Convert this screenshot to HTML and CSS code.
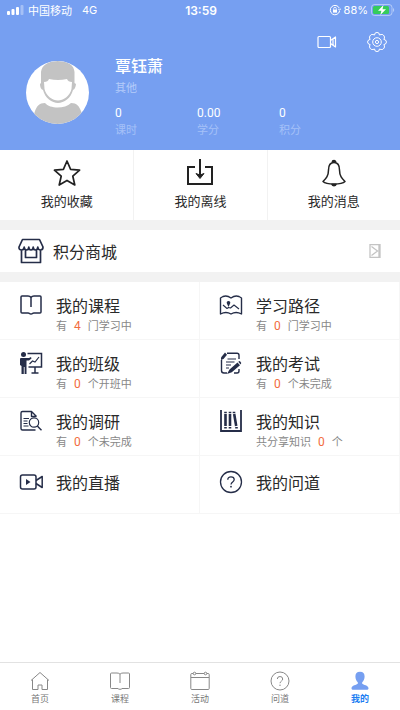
FILE: index.html
```html
<!DOCTYPE html>
<html lang="zh-CN">
<head>
<meta charset="utf-8">
<meta name="viewport" content="width=device-width, initial-scale=1">
<title>我的</title>
<link rel="stylesheet" href="styles.css">
</head>
<body>
<header class="profile">
  <div class="status">
    <div class="status-side">
      <svg class="signal" viewBox="0 0 17 10" fill="#fff"><rect x="0" y="6" width="3" height="4" rx="1"/><rect x="4.5" y="4" width="3" height="6" rx="1"/><rect x="9" y="2" width="3" height="8" rx="1"/><rect x="13.5" y="0" width="3" height="10" rx="1" opacity=".35"/></svg>
      <span>中国移动</span><span class="network">4G</span>
    </div>
    <time class="clock">13:59</time>
    <div class="status-side status-end">
      <svg class="lock" viewBox="0 0 12 12" fill="none" stroke="#fff"><path d="M10.3 4.2A4.7 4.7 0 1 0 10.6 7M9.2 5l1.5 1.2L11.7 4.6"/><path d="M4.7 5.8V4.6a1.3 1.3 0 0 1 2.6 0v1.2" stroke-width=".8"/><rect x="4" y="5.6" width="4" height="3" fill="#fff" stroke="none"/></svg>
      <span>88%</span>
      <svg class="battery" viewBox="0 0 24 12"><rect x=".5" y=".5" width="20.5" height="11" rx="3" fill="none" stroke="#fff" opacity=".45"/><path d="M22 4c1.6.5 1.6 3.5 0 4z" fill="#fff" opacity=".45"/><rect x="2" y="2" width="16" height="8" rx="1.5" fill="#35cc5b"/><path d="M12.5 1 7 6.7h3.4L9.3 11 15 5.2h-3.5z" fill="#fff"/></svg>
    </div>
  </div>
  <div class="tools">
    <button type="button" class="tool" aria-label="视频"><svg viewBox="0 0 22 22" fill="none" stroke="#fff" stroke-width="1.2" stroke-linejoin="round"><rect x="2" y="5.5" width="12.5" height="11" rx="1"/><path d="M14.5 9.500 19.500 6v10l-5-3.500M17 8v6"/></svg></button>
    <button type="button" class="tool" aria-label="设置"><svg viewBox="0 0 22 22" fill="none" stroke="#fff"><path d="M9 2.200Q11 .6 13 2.200L13.400 4Q15 3.200 16.800 3.600Q18.700 4.700 18.500 7L17.800 8.400L19.500 9Q21.500 11 19.500 13L17.800 13.600L18.500 15Q18.700 17.300 16.800 18.400Q15 18.800 13.400 18L13 19.800Q11 21.400 9 19.800L8.600 18Q7 18.800 5.200 18.400Q3.300 17.300 3.500 15L4.200 13.600L2.500 13Q.5 11 2.500 9L4.200 8.400L3.500 7Q3.300 4.700 5.200 3.600Q7 3.200 8.600 4Z" stroke-linejoin="round"/><circle cx="11" cy="11" r="4.300"/><circle cx="11" cy="11" r="1.600"/></svg></button>
  </div>
  <div class="user">
    <svg class="avatar" viewBox="0 0 63 63"><defs><clipPath id="face"><circle cx="31.500" cy="31.500" r="31.500"/></clipPath></defs><g clip-path="url(#face)"><path fill="#fff" d="M0 0h63v63H0z"/><path fill="#c3c3c3" d="M15 22V11C16 4 22 0 32 0s16 4 16.500 11v11l1.500 1q-.5 5-3 6C45 37 38 42 32 42S19 37 17 29q-3-1-3-6z"/><path fill="#fff" d="M18 21q4 0 5-3 9 2 18 0 1 3 5 3l-.5 7C44 35 37 39.500 32 39.500S20 35 18.500 28z"/><path fill="#c3c3c3" d="M5 63l4-13c2-5 4-8 10-8 5 6 20 6 26 0 6 0 8 3 10 8l4 13z"/></g></svg>
    <div class="details">
      <h1 class="name">覃钰萧</h1>
      <p class="role">其他</p>
      <dl class="stats">
        <div><dd>0</dd><dt>课时</dt></div>
        <div><dd>0.00</dd><dt>学分</dt></div>
        <div><dd>0</dd><dt>积分</dt></div>
      </dl>
    </div>
  </div>
</header>
<main>
  <nav class="quick" aria-label="快捷入口">
    <a href="#favorites"><svg viewBox="0 0 28 28" fill="none" stroke="#222" stroke-width="1.700" stroke-linejoin="round"><path d="m14 2 3.600 8.300 9 .9-6.800 6 2 8.800-7.800-4.600L6.200 26l2-8.800-6.800-6 9-.9z"/></svg>我的收藏</a>
    <a href="#offline"><svg viewBox="0 0 28 28" fill="none" stroke="#222" stroke-width="2"><path d="M9 8H2v17h24V8h-7M14 0v18"/><path d="m10 14.500 4 5 4-5-4 1.500z" fill="#222" stroke-width="1"/></svg>我的离线</a>
    <a href="#messages"><svg viewBox="0 0 28 28" fill="none" stroke="#222" stroke-width="1.500" stroke-linejoin="round"><path d="M14 3.500c-4.500 0-5.500 3.500-5.500 7.500 0 6-2.500 8.500-5.500 11.500 2 2 6 2.500 11 2.500s9-.5 11-2.500c-3-3-5.500-5.500-5.500-11.500 0-4-1-7.500-5.500-7.500z"/><path d="M12.300 3a1.700 1.500 0 0 1 3.400 0M12 25.500c.7 1.800 3.300 1.800 4 0z" fill="#222"/></svg>我的消息</a>
  </nav>
  <a class="store" href="#store">
    <svg class="store-icon" viewBox="0 0 26 26" fill="none" stroke="#252d48" stroke-width="1.700" stroke-linejoin="round"><path d="M4.500 1.500h17L25 9q0 3-2.500 3T19.800 9q0 3-2.300 3t-2.300-3q0 3-2.200 3t-2.200-3q0 3-2.300 3T6.200 9q0 3-2.700 3T1 9zM3.500 12v12.500h19V12M7.500 11.500v8h11v-8"/></svg>
    <span>积分商城</span>
    <svg class="store-arrow" viewBox="0 0 12 14" fill="none" stroke="#c4c4c4"><path d="M1 .5h10v13H1zM2.500 2.500l6 4.500-6 4.500M10 1v12" stroke-width="1.300"/></svg>
  </a>
  <nav class="menu" aria-label="学习中心">
    <a href="#courses"><svg viewBox="0 0 24 24" fill="none" stroke="#252d48" stroke-width="1.500" stroke-linejoin="round"><path d="M12 4.500Q11 3 9 3H3q-1 0-1 1v15q0 1 1 1h6q1 0 1.500.5t1.500.5 1.500-.5T15 20h6q1 0 1-1V4q0-1-1-1h-6q-2 0-3 1.500zV14"/></svg><div><h2>我的课程</h2><p>有<b>4</b>门学习中</p></div></a>
    <a href="#paths"><svg viewBox="0 0 24 24" fill="none" stroke="#252d48" stroke-width="1.400" stroke-linejoin="round"><path d="M12 5Q8 2 4 3.500L1.500 5v16Q7 18 12 21q5-3 10.500 0V5L20 3.500Q16 2 12 5z"/><path d="m4 12 4 3.500 1.500-1 2 .5 3.500-3 5 4" stroke-width="1.100"/><path d="M9.500 14 7.900 10.500a1.800 1.800 0 1 1 3.200 0z" fill="#252d48" stroke="none"/></svg><div><h2>学习路径</h2><p>有<b>0</b>门学习中</p></div></a>
    <a href="#classes"><svg viewBox="0 0 24 24" fill="none" stroke="#252d48" stroke-width="1.300"><circle cx="4.500" cy="3.500" r="2.500" fill="#252d48" stroke="none"/><path d="M2 7h8l2-1 .5 1.500L10 9.500H7.500V23H5.600v-7h-.8v7H2.500v-8L1 14V8q0-1 1-1z" fill="#252d48" stroke="none"/><path d="M8.500 2.500H22.500V16H9.500M16 16v6M12.500 22h7" stroke-width="1.500"/><path d="m10.500 13 3-3 2.500 1 4-5" stroke-width="1.200"/></svg><div><h2>我的班级</h2><p>有<b>0</b>个开班中</p></div></a>
    <a href="#exams"><svg viewBox="0 0 24 24" fill="none" stroke="#252d48" stroke-width="1.400"><path d="M8 2.200h10q2 0 2 2V8M2.500 9v10.500q0 2.500 2.500 2.500h3M20 18v2q0 2-2 2h-3"/><path d="M2 9V6.500L6 1.500 8 3.800 4.500 8z" fill="#252d48" stroke="none"/><path d="M8.500 8H17M7 11h8.500M7 14h5M7 17h3" stroke-width="1.200"/><path d="m10.500 18.500 8-7 2.500 2.800-8.200 7L8 23zM19.300 10.800l1-.8q1 0 2 2l-.8 1.400z" fill="#252d48" stroke="none"/></svg><div><h2>我的考试</h2><p>有<b>0</b>个未完成</p></div></a>
    <a href="#surveys"><svg viewBox="0 0 24 24" fill="none" stroke="#252d48" stroke-width="1.400" stroke-linejoin="round"><path d="M17.500 7.500 12.500 2.500H3.500q-1.500 0-1.500 1.500v15.500Q2 21 3.500 21h13M12.500 2.500v5h5"/><circle cx="15" cy="13.500" r="4.700" stroke-width="1.200"/><path d="m18.300 17 4.200 4.300" stroke-width="1.400"/><path d="M4.500 9.500H10M4.500 12h4M4.500 14.500h4M4.500 17h5" stroke-width="1.100"/></svg><div><h2>我的调研</h2><p>有<b>0</b>个未完成</p></div></a>
    <a href="#knowledge"><svg viewBox="0 0 24 24" fill="none" stroke="#252d48"><path d="M2 1v21h20V1" stroke-width="1.800"/><path d="M6.500 5v12M11 5v12M15.200 5l2 12" stroke-width="2.600"/><path d="M5.200 3.500h2.600M9.700 3.500h2.600M13.700 3.500h2.600M5.200 18.800h2.600M9.700 18.800h2.600M16.200 18.800h2.600" stroke-width="1.500"/></svg><div><h2>我的知识</h2><p>共分享知识<b>0</b>个</p></div></a>
    <a class="solo" href="#live"><svg viewBox="0 0 24 24" fill="none" stroke="#252d48" stroke-width="1.500" stroke-linejoin="round"><rect x="1.500" y="5" width="15.500" height="14" rx="2"/><path d="M17 10.500 23.200 6.500v11l-6.200-4"/><path d="m7 9 4.500 3L7 15z" fill="#252d48" stroke="none"/></svg><div><h2>我的直播</h2></div></a>
    <a class="solo" href="#questions"><svg viewBox="0 0 24 24" fill="none" stroke="#252d48" stroke-width="1.300"><circle cx="12" cy="12" r="10.500"/><path d="M8.800 9.800Q8.800 6.800 12 6.800t3.200 2.800q0 1.400-1.500 2.400T12 14.500"/><circle cx="12" cy="16.700" r=".9" fill="#252d48" stroke="none"/></svg><div><h2>我的问道</h2></div></a>
  </nav>
</main>
<nav class="tabs" aria-label="主导航">
  <a href="#home"><svg viewBox="0 0 20 20" fill="none" stroke="#888" stroke-linejoin="round"><path d="M1 9.500 10 1.500l9 8M2.500 8.500v10H8v-4.500h4v4.500h5.500v-10"/></svg>首页</a>
  <a href="#course-list"><svg viewBox="0 0 20 20" fill="none" stroke="#888" stroke-linejoin="round"><path d="M10 3.200Q9 2 7 2H1.500Q.5 2 .5 3v13.500q0 1 1 1H8q.5.800 2 .8t2-.8h6.500q1 0 1-1V3q0-1-1-1H13q-2 0-3 1.200zV12"/></svg>课程</a>
  <a href="#activities"><svg viewBox="0 0 20 20" fill="none" stroke="#888"><rect x=".8" y="2.500" width="18.400" height="16" rx="1"/><path d="M1 6.500h18"/><circle cx="4.500" cy="2.500" r="1.300" fill="#fff"/><circle cx="15.500" cy="2.500" r="1.300" fill="#fff"/></svg>活动</a>
  <a href="#ask"><svg viewBox="0 0 20 20" fill="none" stroke="#888"><circle cx="10" cy="10" r="9"/><path d="M7.300 8q0-2.500 2.700-2.500T12.700 8q0 1.200-1.300 2.100T10 12.200"/><circle cx="10" cy="14.200" r=".7" fill="#888" stroke="none"/></svg>问道</a>
  <a class="active" href="#me" aria-current="page"><svg viewBox="0 0 20 20" fill="#769ff1"><path d="M10 .8c-3.200 0-4.600 2-4.600 4.700 0 2.400 1 4.700 2.400 5.700v1.600c-1 1-6.300 1.700-6.300 4.500 0 1.300.8 1.500 2 1.500h13c1.200 0 2-.2 2-1.500 0-2.800-5.300-3.500-6.300-4.500v-1.600c1.400-1 2.400-3.300 2.400-5.700C14.600 2.800 13.200.8 10 .8z"/></svg>我的</a>
</nav>
</body>
</html>
```

FILE: styles.css
```css
* {
  box-sizing: border-box;
  margin: 0;
  padding: 0;
}

body {
  display: flex;
  flex-direction: column;
  min-height: 100vh;
  background: #fff;
  color: #2a2a2a;
  font-family: "Noto Sans CJK SC", sans-serif;
}

a {
  color: inherit;
  text-decoration: none;
}

svg {
  display: block;
  flex: none;
}

.profile {
  padding-bottom: 12px;
  background: #769ff1;
  color: #fff;
}

.status {
  display: flex;
  align-items: center;
  height: 20px;
  padding: 0 5px 0 7px;
  font-family: Inter, "Noto Sans CJK SC", sans-serif;
  font-size: 11px;
}

.status-side {
  display: flex;
  flex: 1;
  align-items: center;
  gap: 4px;
}

.status-end {
  gap: 3px;
  justify-content: flex-end;
}

.network {
  margin-left: 6px;
}

.clock {
  font-size: 12px;
  font-weight: 600;
}

.signal {
  width: 17px;
  height: 10px;
}

.lock {
  width: 12px;
  height: 12px;
}

.battery {
  width: 24px;
  height: 12px;
}

.tools {
  display: flex;
  justify-content: flex-end;
  gap: 28px;
  padding: 11px 12px 0;
}

.tool {
  width: 22px;
  height: 22px;
  border: 0;
  background: none;
}

.user {
  display: flex;
  gap: 26px;
  padding-left: 26px;
}

.avatar {
  width: 63px;
  height: 63px;
  margin-top: 8px;
}

.details {
  flex: 1;
}

.name {
  font-size: 16px;
  font-weight: 500;
  line-height: 24px;
}

.role {
  color: #b4ccfa;
  font-size: 11px;
  line-height: 20px;
}

.stats {
  display: flex;
  margin-top: 8px;
}

.stats div {
  width: 82px;
}

.stats dd {
  font-family: Roboto, sans-serif;
  font-size: 12px;
  line-height: 16px;
}

.stats dt {
  color: #a5c1f8;
  font-size: 11px;
  line-height: 17px;
}

.quick {
  display: grid;
  grid-template-columns: repeat(3, 1fr);
  height: 70px;
}

.quick a {
  display: flex;
  flex-direction: column;
  align-items: center;
  gap: 4px;
  padding-top: 9px;
  font-size: 13px;
  line-height: 20px;
}

.quick a + a {
  border-left: 1px solid #f2f2f2;
}

.quick svg {
  width: 28px;
  height: 28px;
}

.store {
  display: flex;
  align-items: center;
  gap: 9px;
  height: 62px;
  padding: 0 19px 0 18px;
  border: solid #f2f2f2;
  border-width: 10px 0;
  font-size: 16px;
  line-height: 24px;
}

.store-icon {
  width: 26px;
  height: 26px;
}

.store-arrow {
  width: 12px;
  height: 14px;
  margin-left: auto;
}

.menu {
  display: grid;
  grid-template-columns: 1fr 1fr;
}

.menu a {
  display: flex;
  gap: 13px;
  height: 58px;
  padding: 11px 0 0 19px;
  border: solid #f6f6f6;
  border-width: 0 1px 1px 0;
}

.menu .solo {
  padding-top: 14px;
}

.menu svg {
  width: 24px;
  height: 24px;
}

.menu h2 {
  font-size: 16px;
  font-weight: 400;
  line-height: 24px;
}

.menu p {
  color: #888;
  font-size: 11px;
  line-height: 16px;
}

.menu b {
  margin: 0 7px;
  color: #f26c40;
  font-family: Roboto, sans-serif;
  font-size: 12px;
  font-weight: 400;
}

.tabs {
  display: grid;
  grid-template-columns: repeat(5, 1fr);
  height: 48px;
  margin-top: auto;
  border-top: 1px solid #e2e2e2;
  color: #777;
}

.tabs a {
  display: flex;
  flex-direction: column;
  align-items: center;
  padding-top: 8px;
  font-size: 9px;
  line-height: 16px;
}

.tabs svg {
  width: 20px;
  height: 20px;
}

.tabs .active {
  color: #1c7df2;
  font-weight: 700;
}
```
